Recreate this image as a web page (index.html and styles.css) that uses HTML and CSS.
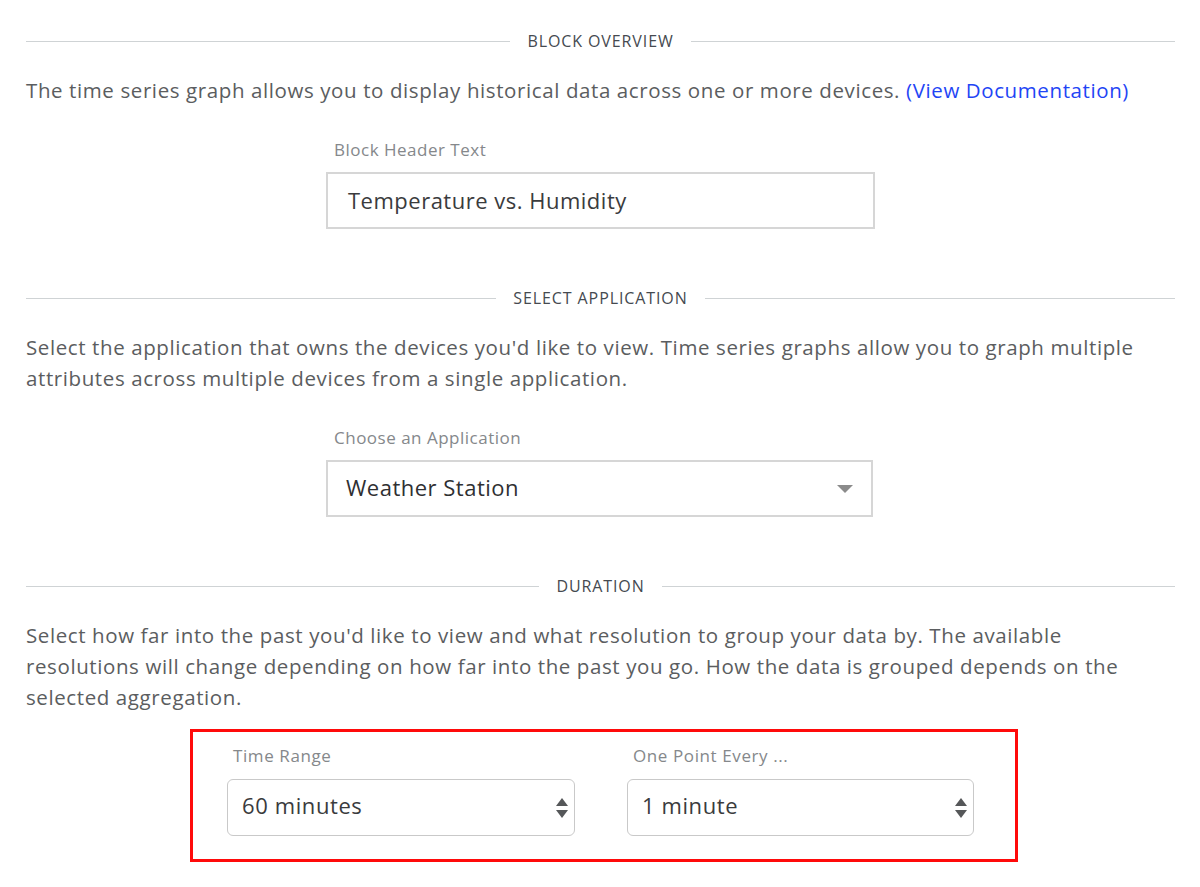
FILE: index.html
```html
<!DOCTYPE html>
<html>
<head>
<meta charset="utf-8">
<link rel="stylesheet" href="styles.css">
</head>
<body>
<div class="page">
  <div class="divider"><span class="line"></span><span class="divider-text">BLOCK OVERVIEW</span><span class="line"></span></div>
  <p class="desc first">The time series graph allows you to display historical data across one or more devices. <a class="doc-link" href="#">(View Documentation)</a></p>
  <div class="field">
    <label class="field-label">Block Header Text</label>
    <div class="text-input">Temperature vs. Humidity</div>
  </div>

  <div class="divider section"><span class="line"></span><span class="divider-text">SELECT APPLICATION</span><span class="line"></span></div>
  <p class="desc">Select the application that owns the devices you'd like to view. Time series graphs allow you to graph multiple<br>attributes across multiple devices from a single application.</p>
  <div class="field">
    <label class="field-label">Choose an Application</label>
    <div class="select-input"><span>Weather Station</span><span class="caret"></span></div>
  </div>

  <div class="divider section"><span class="line"></span><span class="divider-text">DURATION</span><span class="line"></span></div>
  <p class="desc">Select how far into the past you'd like to view and what resolution to group your data by. The available<br>resolutions will change depending on how far into the past you go. How the data is grouped depends on the<br>selected aggregation.</p>

  <div class="highlight">
    <div class="small-field">
      <label class="small-label">Time Range</label>
      <div class="native-select"><span class="value">60 minutes</span><span class="updown"><span class="up"></span><span class="down"></span></span></div>
    </div>
    <div class="small-field">
      <label class="small-label">One Point Every ...</label>
      <div class="native-select"><span class="value">1 minute</span><span class="updown"><span class="up"></span><span class="down"></span></span></div>
    </div>
  </div>
</div>
</body>
</html>
```

FILE: styles.css
```css
html, body {
  margin: 0;
  padding: 0;
  background: #ffffff;
}

body {
  font-family: "Open Sans", "Noto Sans", sans-serif;
  color: #5a5c5e;
}

.page {
  padding: 31px 25px 0 26px;
}

.divider {
  display: flex;
  align-items: center;
  gap: 17px;
  height: 20px;
}

.divider.section {
  margin-top: 59px;
}

.line {
  flex: 1;
  height: 1px;
  background: #cfd3d5;
}

.divider-text {
  font-size: 16px;
  line-height: 20px;
  letter-spacing: 0.9px;
  color: #454a50;
}

.desc {
  margin: 24px 0 0 0;
  font-size: 20.5px;
  line-height: 31px;
  letter-spacing: 0.6px;
  color: #5b5d60;
}

.doc-link {
  color: #1f45f5;
  text-decoration: none;
}

.field {
  width: 549px;
  margin: 33px auto 0 auto;
  display: flex;
  flex-direction: column;
}

.field-label {
  font-size: 17px;
  line-height: 22px;
  letter-spacing: 0.5px;
  color: #85888b;
  padding-left: 8px;
  margin-bottom: 11px;
}

.text-input {
  height: 57px;
  box-sizing: border-box;
  border: 2px solid #d6d6d6;
  padding: 0 20px 2px 20px;
  display: flex;
  align-items: center;
  font-size: 22px;
  letter-spacing: 0.5px;
  color: #3a3b3d;
}

.select-input {
  width: 547px;
  height: 57px;
  box-sizing: border-box;
  border: 2px solid #d6d6d6;
  padding: 0 18px 0 18px;
  display: flex;
  align-items: center;
  justify-content: space-between;
  font-size: 22px;
  letter-spacing: 0.5px;
  color: #2f3032;
}

.select-input span:first-child {
  padding-bottom: 3px;
}

.caret {
  width: 0;
  height: 0;
  border-left: 8px solid transparent;
  border-right: 8px solid transparent;
  border-top: 8px solid #8b8b8b;
}

.highlight {
  margin: 16px 0 0 164px;
  width: 828px;
  box-sizing: border-box;
  border: 3px solid #ff0a0a;
  padding: 13px 41px 23px 34px;
  display: flex;
  gap: 52px;
}

.small-field {
  display: flex;
  flex-direction: column;
  width: 348px;
}

.small-field + .small-field {
  width: 347px;
}

.small-label {
  font-size: 17px;
  line-height: 22px;
  letter-spacing: 0.6px;
  color: #85888b;
  padding-left: 6px;
  margin-bottom: 12px;
}

.native-select {
  height: 57px;
  box-sizing: border-box;
  border: 1px solid #c9c9c9;
  border-radius: 6px;
  padding: 0 6px 0 14px;
  display: flex;
  align-items: center;
  justify-content: space-between;
  font-size: 22px;
  letter-spacing: 0.6px;
  color: #3a3b3d;
}

.native-select .value {
  padding-bottom: 5px;
}

.updown {
  display: flex;
  flex-direction: column;
  gap: 4px;
  width: 12px;
  align-items: center;
}

.up {
  width: 0;
  height: 0;
  border-left: 6px solid transparent;
  border-right: 6px solid transparent;
  border-bottom: 8px solid #555759;
}

.down {
  width: 0;
  height: 0;
  border-left: 6px solid transparent;
  border-right: 6px solid transparent;
  border-top: 8px solid #555759;
}
```
